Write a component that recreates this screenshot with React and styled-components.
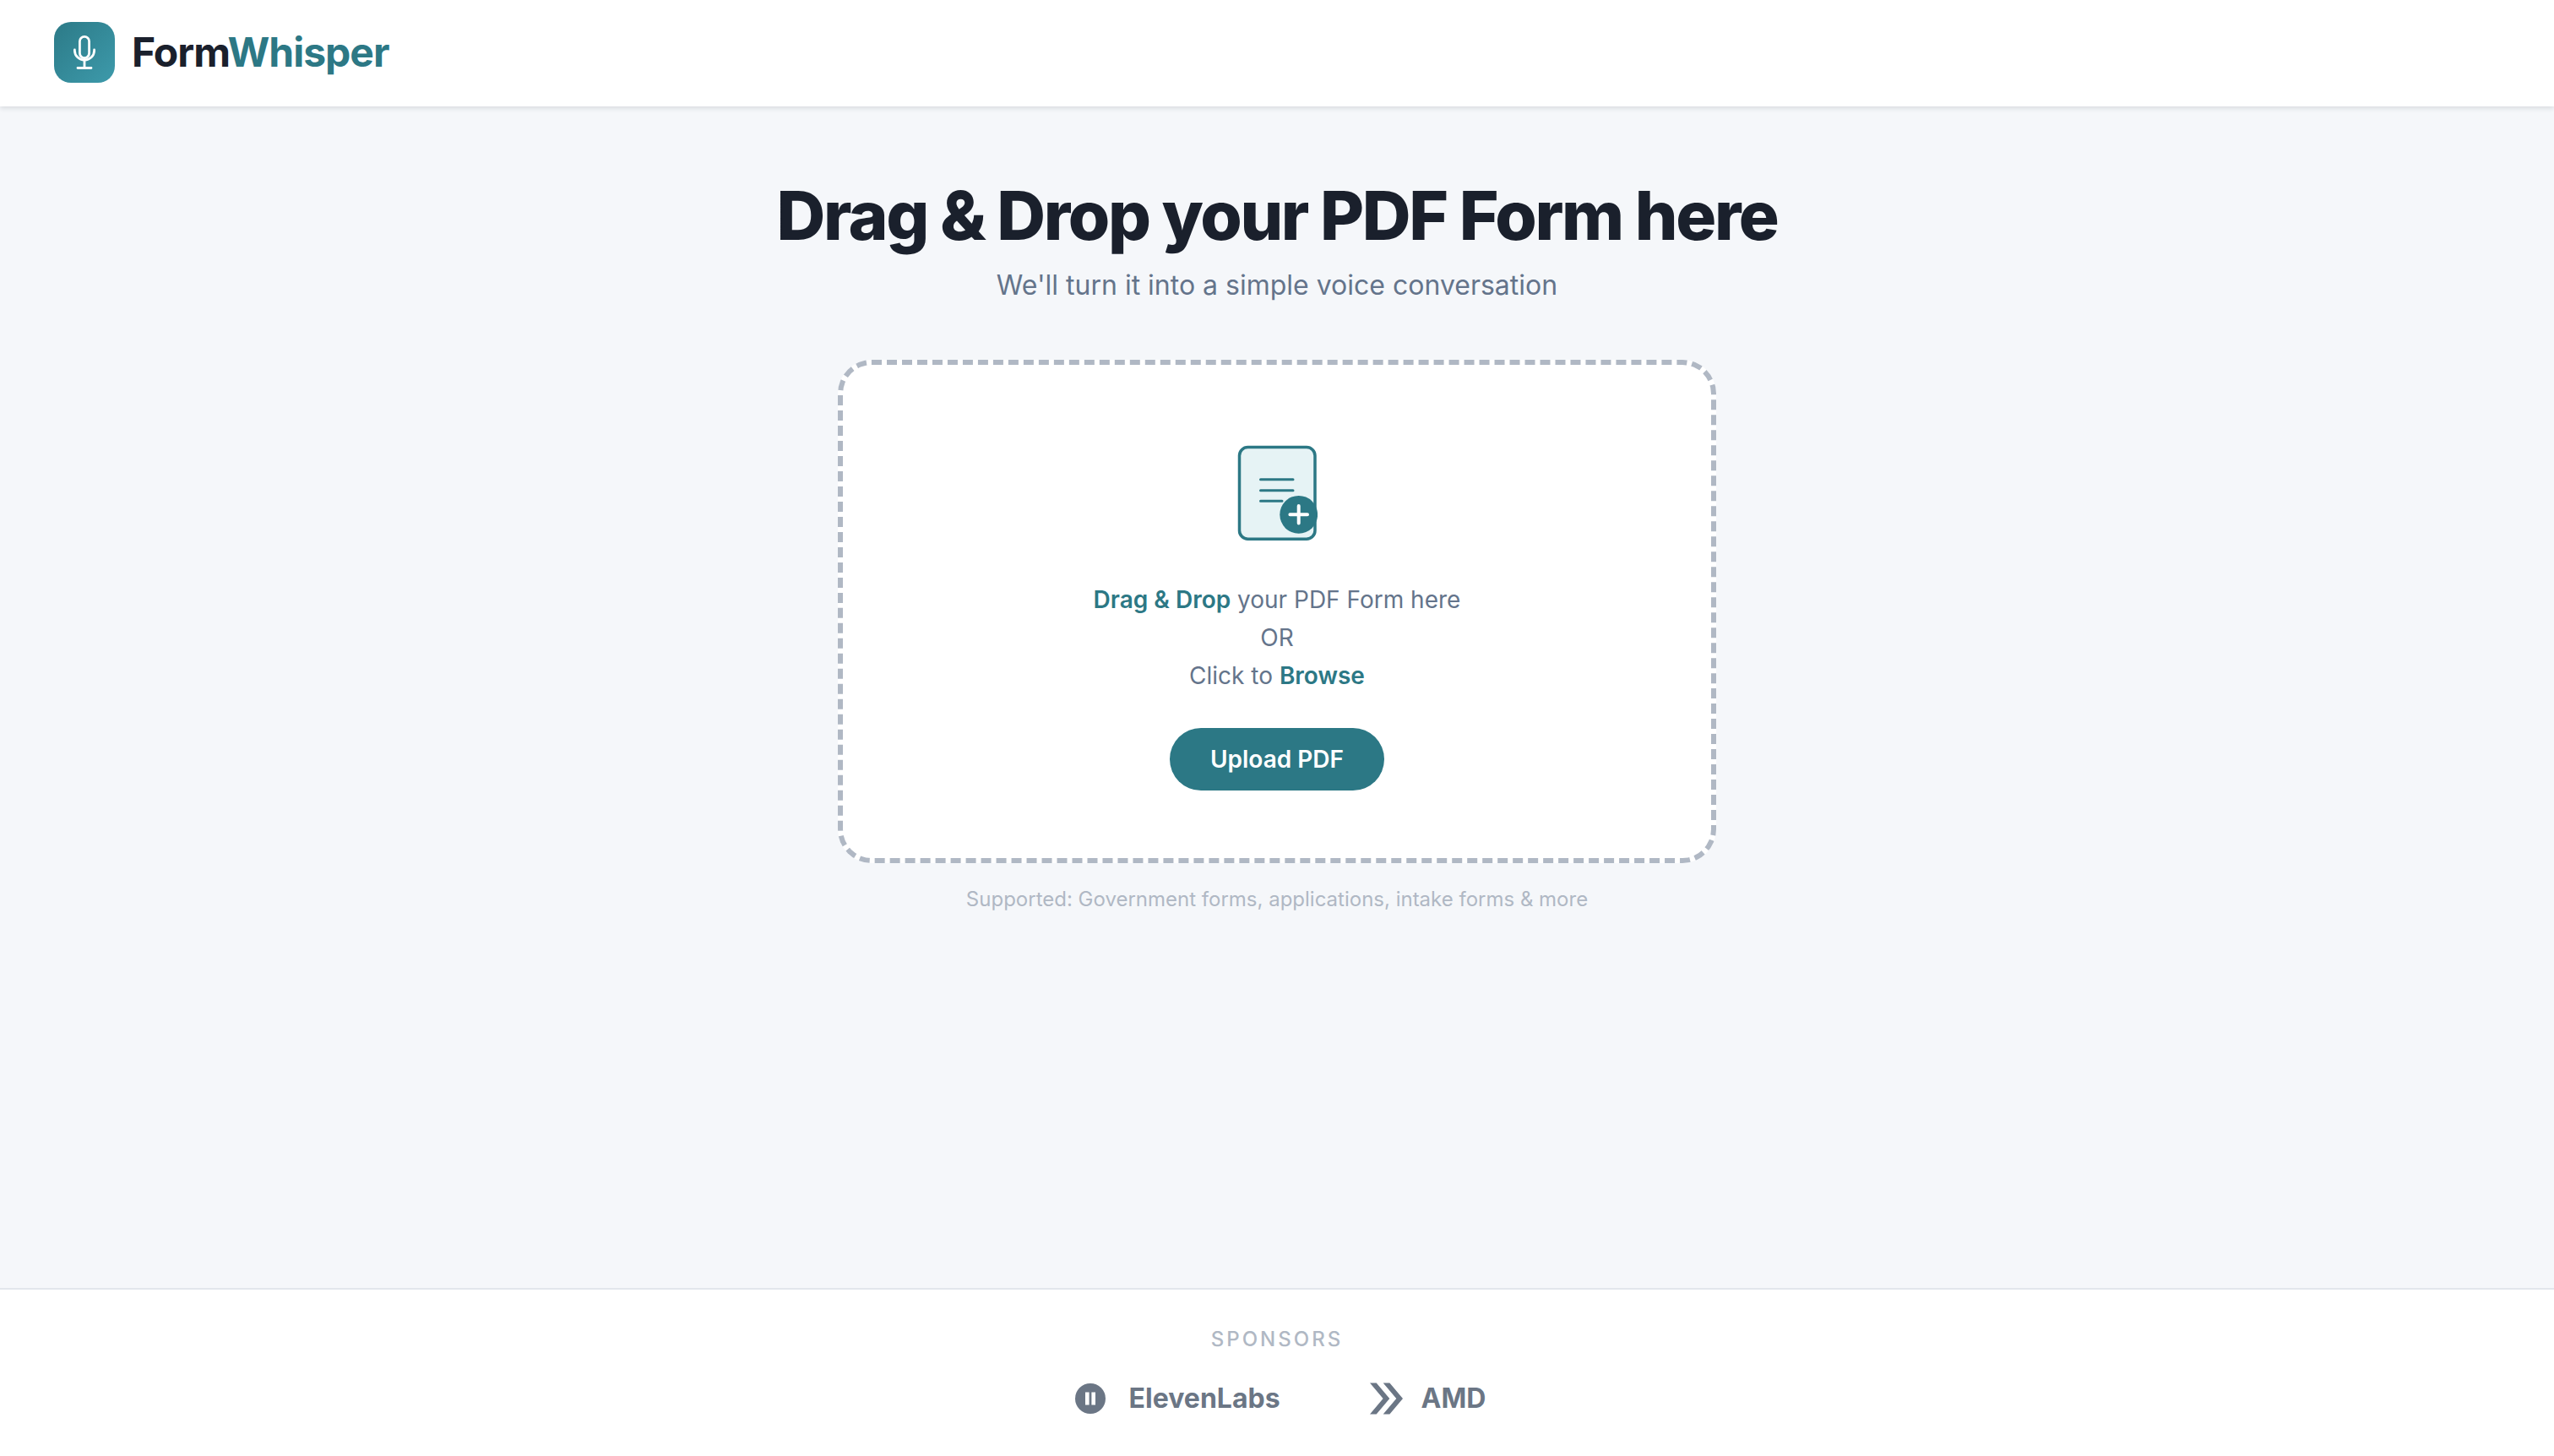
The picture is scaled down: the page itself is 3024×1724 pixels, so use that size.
import React from "react";
import styled, { createGlobalStyle } from "styled-components";

const Global = createGlobalStyle`
  html, body { margin: 0; padding: 0; height: 100%; }
  body { background: #f5f7fa; font-family: Inter, "Liberation Sans", sans-serif; }
  * { box-sizing: border-box; }
`;
const Page = styled.div`
  display: flex; flex-direction: column; height: 1724px; background: #f5f7fa;
`;
const Header = styled.header`
  height: 126px; flex: none; background: #fff; display: flex; align-items: center; gap: 20px;
  padding: 0 64px 2px; box-shadow: 0 2px 6px rgba(26, 32, 44, 0.14); position: relative;
`;
const LogoMark = styled.div`
  width: 72px; height: 72px; border-radius: 20px; display: flex; align-items: center; justify-content: center;
  background: linear-gradient(135deg, #2c7a87, #3d9aab);
`;
const Brand = styled.div`
  font-size: 48px; font-weight: 700; letter-spacing: -1px; color: #1a202c; line-height: 1;
`;
const Accent = styled.span`color: #2c7885;`;
const Main = styled.main`
  flex: 1; display: flex; flex-direction: column; align-items: center; padding-top: 78px;
`;
const Title = styled.h1`
  margin: 0; font-size: 80px; line-height: 102px; font-weight: 800; letter-spacing: -2.4px; color: #1a202c;
`;
const Subtitle = styled.p`
  margin: 8px 0 0; font-size: 32px; line-height: 48px; color: #64748b; font-weight: 400;
`;
const Drop = styled.section`
  margin-top: 64px; width: 1040px; height: 596px; background: #fff; border: 6px dashed #b0b8c4; border-radius: 40px;
  display: flex; flex-direction: column; align-items: center; padding-top: 95px;
`;
const Lines = styled.div`
  margin-top: 47px; font-size: 28px; line-height: 45px; color: #64748b; text-align: center;
`;
const Strong = styled.strong`color: #2c7885; font-weight: 600;`;
const Upload = styled.button`
  margin-top: 39px; width: 254px; height: 74px; border: 0; border-radius: 37px; background: #2c7885; color: #fff;
  font: 600 28px Inter, "Liberation Sans", sans-serif;
`;
const Hint = styled.p`
  margin: 25px 0 0; font-size: 24px; line-height: 36px; color: #b0b8c4;
`;
const Footer = styled.footer`
  height: 199px; flex: none; background: #fff; border-top: 2px solid #e2e6ec; display: flex; flex-direction: column; align-items: center;
  padding-top: 44px;
`;
const SponsorLabel = styled.div`
  font-size: 24px; line-height: 30px; font-weight: 500; letter-spacing: 3px; color: #b0b8c4;
`;
const Sponsors = styled.div`
  margin-top: 35px; padding-left: 6px; display: flex; align-items: center; gap: 105px;
`;
const Sponsor = styled.div`
  display: flex; align-items: center; gap: ${(p) => p.$gap}px; font-size: 32px; font-weight: 700; color: #6b7685; line-height: 40px;
`;

export default function App() {
  return (
    <Page>
      <Global />
      <Header>
        <LogoMark>
          <svg width="36" height="44" viewBox="0 0 36 44" fill="none" stroke="#fff" strokeWidth="2.8" strokeLinecap="round">
            <rect x="12.4" y="3.4" width="11.2" height="25.2" rx="5.6" />
            <path d="M6.4 19v1a11.6 11 0 0 0 23.2 0v-1" />
            <path d="M18 31v9M10 40.5h16" />
          </svg>
        </LogoMark>
        <Brand>Form<Accent>Whisper</Accent></Brand>
      </Header>
      <Main>
        <Title>Drag &amp; Drop your PDF Form here</Title>
        <Subtitle>We'll turn it into a simple voice conversation</Subtitle>
        <Drop>
          <svg width="96" height="114" viewBox="0 0 96 114" fill="none">
            <rect x="3.5" y="2.5" width="89.5" height="108.7" rx="10" fill="#e6f3f5" stroke="#2c7885" strokeWidth="3.5" />
            <path d="M28.5 40.7h38.5M28.5 53.7h38.5M28.5 66.3h25.5" stroke="#2c7885" strokeWidth="3" strokeLinecap="round" />
            <circle cx="73.7" cy="82.3" r="22.4" fill="#2c7885" />
            <path d="M73.7 72v20.6M63.4 82.3h20.6" stroke="#fff" strokeWidth="4" strokeLinecap="round" />
          </svg>
          <Lines>
            <div><Strong>Drag &amp; Drop</Strong> your PDF Form here</div>
            <div>OR</div>
            <div>Click to <Strong>Browse</Strong></div>
          </Lines>
          <Upload>Upload PDF</Upload>
        </Drop>
        <Hint>Supported: Government forms, applications, intake forms &amp; more</Hint>
      </Main>
      <Footer>
        <SponsorLabel>SPONSORS</SponsorLabel>
        <Sponsors>
          <Sponsor $gap={26}>
            <svg width="40" height="40" viewBox="0 0 40 40">
              <circle cx="20" cy="20" r="18" fill="#6b7685" />
              <path d="M14 12.5h4.6v15H14zM21.4 12.5H26v15h-4.6z" fill="#fff" />
            </svg>
            ElevenLabs
          </Sponsor>
          <Sponsor $gap={20}>
            <svg width="42" height="38" viewBox="0 0 42 38" fill="#6b7685">
              <path d="M1 .5h7.7l15.6 18.5L8.7 37.5H1L16.6 19zM16.7.5h7.7L40 19 24.4 37.5h-7.7L32.3 19z" />
            </svg>
            AMD
          </Sponsor>
        </Sponsors>
      </Footer>
    </Page>
  );
}
